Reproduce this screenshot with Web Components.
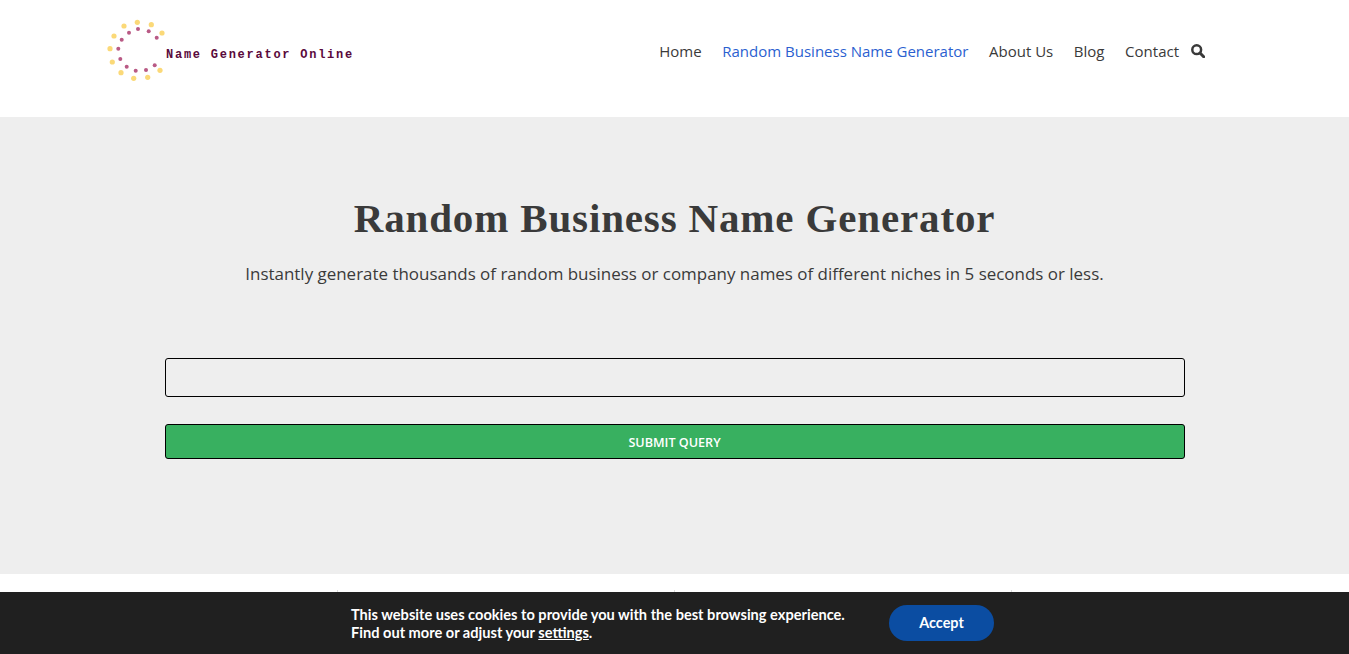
<!DOCTYPE html>
<html lang="en">
<head>
<meta charset="utf-8">
<title>Random Business Name Generator</title>
<style>
  html, body { margin: 0; padding: 0; background: #fff; }
  body { font-family: "Open Sans", "Noto Sans", sans-serif; color: #3a3a3a; }
</style>
</head>
<body>
<site-header>
  <site-logo slot="logo"></site-logo>
  <nav-link href="#">Home</nav-link>
  <nav-link href="#" active>Random Business Name Generator</nav-link>
  <nav-link href="#">About Us</nav-link>
  <nav-link href="#">Blog</nav-link>
  <nav-link href="#">Contact</nav-link>
</site-header>
<hero-section heading="Random Business Name Generator">
  Instantly generate thousands of random business or company names of different niches in 5 seconds or less.
  <query-form slot="form" label="Submit Query"></query-form>
</hero-section>
<page-columns></page-columns>
<cookie-bar>
  This website uses cookies to provide you with the best browsing experience.<br>
  Find out more or adjust your <a href="#">settings</a>.
</cookie-bar>

<script>
class SiteLogo extends HTMLElement {
  constructor() {
    super();
    this.attachShadow({ mode: "open" });
  }

  connectedCallback() {
    const yellow = [[137.3,22.3],[151.3,24.7],[162,33],[124,26],[114,36],[110,48.7],[112.3,62],[121,72.7],[133.7,78.3],[147.7,77.3],[160,70.3]];
    const pink = [[129,32.7],[138,29],[148.7,31.3],[156.7,37.7],[121.7,39.7],[118.3,48.7],[120.3,59],[126.7,66.7],[135.7,70.7],[146,70],[154.7,65.3]];
    const dots = (list, r, fill) => list
      .map(([x, y]) => `<circle cx="${x - 100}" cy="${y - 14}" r="${r}" fill="${fill}"/>`)
      .join("");
    this.shadowRoot.innerHTML = `
      <style>
        :host { display: flex; align-items: center; width: 260px; height: 72px; margin-top: -1px; }
        svg { display: block; flex: none; margin-left: -8px; }
        span {
          font: bold 12px "Liberation Mono", monospace;
          letter-spacing: 1.75px;
          color: #5a0a3c;
          white-space: nowrap;
          margin: 9px 0 0 -6px;
        }
      </style>
      <svg width="72" height="72" viewBox="0 0 72 72">
        ${dots(yellow, 2.6, "#fbd978")}
        ${dots(pink, 2, "#b95a85")}
      </svg>
      <span>Name Generator Online</span>
    `;
  }
}

class NavLink extends HTMLElement {
  constructor() {
    super();
    this.attachShadow({ mode: "open" });
  }

  connectedCallback() {
    const color = this.hasAttribute("active") ? "#2b5fd0" : "#3a3a3a";
    this.shadowRoot.innerHTML = `
      <style>
        :host { display: block; }
        a { color: ${color}; text-decoration: none; font-size: 15px; white-space: nowrap; }
      </style>
      <a href="${this.getAttribute("href")}"><slot></slot></a>
    `;
  }
}

class SiteHeader extends HTMLElement {
  constructor() {
    super();
    this.attachShadow({ mode: "open" });
    this.shadowRoot.innerHTML = `
      <style>
        :host { display: block; height: 117px; background: #fff; }
        .inner {
          display: flex;
          align-items: center;
          justify-content: space-between;
          box-sizing: border-box;
          height: 101px;
          padding: 0 144px 0 108px;
        }
        nav { display: flex; align-items: center; gap: 20.6px; }
        svg { display: block; margin-left: -8.6px; }
      </style>
      <div class="inner">
        <slot name="logo"></slot>
        <nav>
          <slot></slot>
          <svg width="14" height="14" viewBox="0 0 14 14" fill="none" stroke="#3a3a3a">
            <circle cx="5.7" cy="5.7" r="4.4" stroke-width="2.5"/>
            <path d="M9 9l3.7 3.7" stroke-width="3" stroke-linecap="round"/>
          </svg>
        </nav>
      </div>
    `;
  }
}

class QueryForm extends HTMLElement {
  constructor() {
    super();
    this.attachShadow({ mode: "open" });
  }

  connectedCallback() {
    this.shadowRoot.innerHTML = `
      <style>
        :host { display: flex; flex-direction: column; gap: 27px; width: 1020px; }
        input, button {
          display: block;
          box-sizing: border-box;
          width: 100%;
          border: 1px solid #000;
          border-radius: 3px;
          margin: 0;
        }
        input { height: 39px; background: #eee; }
        button {
          height: 35px;
          background: #38b060;
          color: #fff;
          font: 600 12.6px "Open Sans", sans-serif;
          text-transform: uppercase;
          padding: 1px 0 0;
        }
      </style>
      <input type="text" aria-label="Query">
      <button type="button">${this.getAttribute("label")}</button>
    `;
  }
}

class HeroSection extends HTMLElement {
  constructor() {
    super();
    this.attachShadow({ mode: "open" });
  }

  connectedCallback() {
    this.shadowRoot.innerHTML = `
      <style>
        :host {
          display: flex;
          flex-direction: column;
          align-items: center;
          box-sizing: border-box;
          height: 457px;
          padding-top: 78px;
          background: #eee;
          color: #3a3a3a;
          text-align: center;
        }
        h1 {
          margin: 0;
          font: bold 41px/46px "Liberation Serif", serif;
          letter-spacing: 0.85px;
        }
        p { margin: 20px 0 0; font-size: 16.95px; line-height: 26px; }
        .form { margin-top: 71px; }
      </style>
      <h1>${this.getAttribute("heading")}</h1>
      <p><slot></slot></p>
      <div class="form"><slot name="form"></slot></div>
    `;
  }
}

class PageColumns extends HTMLElement {
  constructor() {
    super();
    this.attachShadow({ mode: "open" });
    this.shadowRoot.innerHTML = `
      <style>
        :host {
          display: flex;
          gap: 336px;
          box-sizing: border-box;
          height: 80px;
          padding: 16px 0 0 337px;
          background: #fff;
        }
        i { display: block; width: 1px; height: 2px; background: #ddd; }
      </style>
      <i></i><i></i><i></i>
    `;
  }
}

class CookieBar extends HTMLElement {
  constructor() {
    super();
    this.attachShadow({ mode: "open" });
    this.shadowRoot.innerHTML = `
      <style>
        :host {
          position: fixed;
          left: 0;
          right: 0;
          bottom: 0;
          height: 62px;
          display: flex;
          align-items: center;
          background: #202020;
          color: #fff;
          font: bold 14.6px/18px Lato, "Open Sans", sans-serif;
          padding-left: 351px;
        }
        .msg { width: 538px; padding-top: 1px; }
        ::slotted(a) { color: #fff; text-decoration: underline; }
        button {
          width: 105px;
          height: 36px;
          border: 0;
          border-radius: 18px;
          background: #0b4da2;
          color: #fff;
          font: bold 14.4px Lato, "Open Sans", sans-serif;
          padding: 0 0 1px;
        }
      </style>
      <div class="msg"><slot></slot></div>
      <button type="button">Accept</button>
    `;
  }
}

customElements.define("site-logo", SiteLogo);
customElements.define("nav-link", NavLink);
customElements.define("site-header", SiteHeader);
customElements.define("query-form", QueryForm);
customElements.define("hero-section", HeroSection);
customElements.define("page-columns", PageColumns);
customElements.define("cookie-bar", CookieBar);
</script>
</body>
</html>
